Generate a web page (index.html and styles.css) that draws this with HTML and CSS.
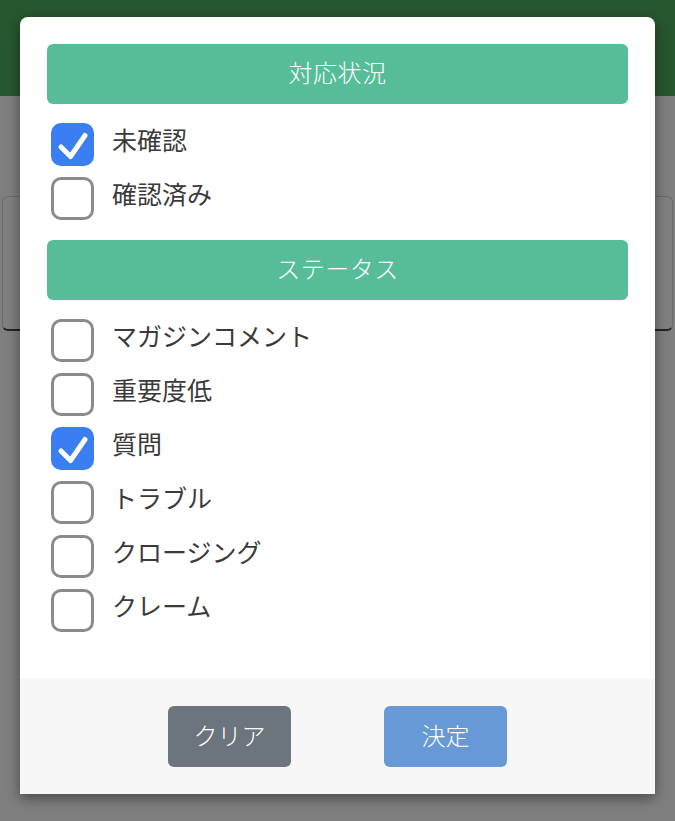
FILE: index.html
```html
<!DOCTYPE html>
<html lang="ja">
<head>
<meta charset="utf-8">
<link rel="stylesheet" href="styles.css">
</head>
<body>
<div class="page">
  <div class="topbar"></div>
  <div class="content">
    <div class="bg-card"></div>
  </div>
</div>
<div class="modal">
  <div class="modal-body">
    <div class="section-title">対応状況</div>
    <ul class="opts">
      <li class="opt"><span class="box checked"><svg viewBox="0 0 43 43"><path d="M10 24 L19.5 33.5 L34 12.5" /></svg></span><span class="label">未確認</span></li>
      <li class="opt"><span class="box"></span><span class="label">確認済み</span></li>
    </ul>
    <div class="section-title">ステータス</div>
    <ul class="opts">
      <li class="opt"><span class="box"></span><span class="label">マガジンコメント</span></li>
      <li class="opt"><span class="box"></span><span class="label">重要度低</span></li>
      <li class="opt"><span class="box checked"><svg viewBox="0 0 43 43"><path d="M10 24 L19.5 33.5 L34 12.5" /></svg></span><span class="label">質問</span></li>
      <li class="opt"><span class="box"></span><span class="label">トラブル</span></li>
      <li class="opt"><span class="box"></span><span class="label">クロージング</span></li>
      <li class="opt"><span class="box"></span><span class="label">クレーム</span></li>
    </ul>
  </div>
  <div class="modal-footer">
    <button class="btn btn-clear">クリア</button>
    <button class="btn btn-ok">決定</button>
  </div>
</div>
</body>
</html>
```
FILE: styles.css
```css
html, body {
  margin: 0;
  padding: 0;
}
body {
  width: 675px;
  height: 821px;
  overflow: hidden;
  background: #7f7f7f;
  font-family: "Noto Sans CJK JP", "Noto Sans", sans-serif;
  position: relative;
}
.page {
  display: flex;
  flex-direction: column;
}
.topbar {
  height: 96px;
  background: #27572f;
}
.content {
  padding: 100px 2px 0 2px;
}
.bg-card {
  height: 132px;
  border: 1px solid #6c6c6c;
  border-bottom: 2px solid #222;
  border-radius: 6px;
  background: #808080;
}
.modal {
  position: absolute;
  left: 20px;
  top: 17px;
  width: 635px;
  height: 777px;
  background: #fff;
  border-radius: 8px 8px 0 0;
  box-shadow: 0 4px 14px rgba(0,0,0,0.45);
  display: flex;
  flex-direction: column;
}
.modal-body {
  flex: 1;
  padding: 27px 27px 0 27px;
}
.section-title {
  height: 60px;
  box-sizing: border-box;
  padding-bottom: 5px;
  background: #57bd98;
  border-radius: 6px;
  color: #fff;
  font-size: 24px;
  font-weight: 300;
  display: flex;
  align-items: center;
  justify-content: center;
  letter-spacing: 0.5px;
}
.opts {
  list-style: none;
  margin: 0;
  padding: 19px 0 20px 4px;
  display: flex;
  flex-direction: column;
  gap: 11px;
}
.opt {
  display: flex;
  align-items: center;
  height: 43px;
}
.box {
  width: 43px;
  height: 43px;
  box-sizing: border-box;
  border: 3.5px solid #8b8b8b;
  border-radius: 10px;
  flex: none;
}
.box.checked {
  background: #3a7ef1;
  border: none;
}
.box svg {
  width: 43px;
  height: 43px;
  display: block;
}
.box svg path {
  fill: none;
  stroke: #fff;
  stroke-width: 5;
  stroke-linecap: round;
  stroke-linejoin: round;
}
.label {
  margin-left: 18px;
  font-size: 25px;
  font-weight: 400;
  color: #3a3a3a;
  line-height: 1;
  margin-top: -10px;
}
.modal-footer {
  height: 115px;
  background: #f7f7f7;
  display: flex;
  align-items: center;
  justify-content: center;
  gap: 93px;
}
.btn {
  width: 123px;
  height: 61px;
  border: none;
  border-radius: 6px;
  color: #fff;
  font-family: "Noto Sans CJK JP", "Noto Sans", sans-serif;
  font-size: 24px;
  font-weight: 300;
  padding: 0 0 4px 0;
}
.btn-clear {
  background: #6c747e;
}
.btn-ok {
  background: #6699d6;
}
```
